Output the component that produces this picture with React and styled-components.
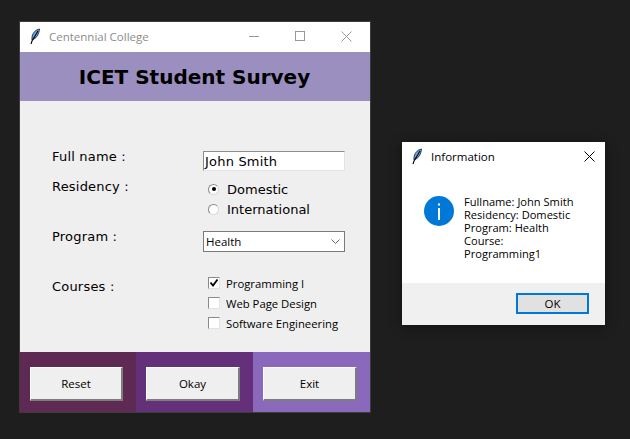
import React from 'react';
import styled, { createGlobalStyle } from 'styled-components';

const GlobalStyle = createGlobalStyle`
  html, body {
    margin: 0;
    padding: 0;
    background: #1e1e1e;
  }
`;

const Desktop = styled.div`
  width: 630px;
  height: 439px;
  overflow: hidden;
  display: flex;
  align-items: flex-start;
  padding: 21px 0 0 19px;
  box-sizing: border-box;
`;

const MainWindow = styled.div`
  width: 352px;
  height: 392px;
  box-sizing: border-box;
  display: flex;
  flex-direction: column;
  flex-shrink: 0;
  border: 1px solid #3c3c3c;
  background: #efefef;
`;

const TitleBar = styled.div`
  height: 30px;
  box-sizing: border-box;
  flex-shrink: 0;
  display: flex;
  align-items: center;
  background: #fff;
  padding: 0 1px 2px 9px;
`;

const TitleText = styled.span`
  font: 11.5px "Open Sans", sans-serif;
  color: ${p => p.$active ? '#000' : '#8c8c8c'};
  margin-left: 8px;
  flex: 1;
`;

const WinButton = styled.div`
  width: ${p => p.$width || 46}px;
  height: 100%;
  display: flex;
  align-items: center;
  justify-content: center;
`;

const Header = styled.div`
  height: 49px;
  box-sizing: border-box;
  flex-shrink: 0;
  display: flex;
  align-items: center;
  justify-content: center;
  padding: 1px 1px 0 0;
  background: #9b8fc0;
  font: bold 20px "DejaVu Sans", sans-serif;
  color: #000;
`;

const Form = styled.div`
  flex: 1;
  display: flex;
  flex-direction: column;
  padding: 47px 0 0 32px;
`;

const FormRow = styled.div`
  height: ${p => p.$height}px;
  display: grid;
  grid-template-columns: 151px 1fr;
  align-items: start;
`;

const Label = styled.div`
  font: 13px/16px "DejaVu Sans", sans-serif;
  color: #000;
  margin-top: ${p => p.$top || 0}px;
  letter-spacing: 0.2px;
`;

const Control = styled.div`
  margin-top: ${p => p.$top || 0}px;
  display: flex;
  flex-direction: column;
`;

const EntryBox = styled.div`
  width: 142px;
  height: 20px;
  box-sizing: border-box;
  background: #fff;
  border: 1px solid #e3e3e3;
  border-top-color: #8e8e8e;
  border-left-color: #8e8e8e;
  padding-left: 1px;
  font: 13px/19px "DejaVu Sans", sans-serif;
  letter-spacing: 0.2px;
  color: #000;
`;

const RadioRow = styled.div`
  height: 20px;
  display: flex;
  align-items: center;
  padding-left: 5px;
  font: 13px "DejaVu Sans", sans-serif;
  color: #000;
`;

const RadioDot = styled.span`
  width: 11px;
  height: 11px;
  border-radius: 50%;
  box-sizing: border-box;
  background: #fff;
  border: 1px solid #8a8a8a;
  border-right-color: #d8d8d8;
  border-bottom-color: #d8d8d8;
  margin-right: 8px;
  display: flex;
  align-items: center;
  justify-content: center;

  &::after {
    content: '';
    width: 4px;
    height: 4px;
    border-radius: 50%;
    background: ${p => p.$on ? '#000' : 'transparent'};
  }
`;

const Select = styled.div`
  width: 142px;
  height: 21px;
  box-sizing: border-box;
  background: #fff;
  border: 1px solid #7a7a7a;
  display: flex;
  align-items: center;
  justify-content: space-between;
  padding: 0 4px 0 2px;
  font: 11.5px "Open Sans", sans-serif;
  color: #000;
`;

const CheckRow = styled.div`
  height: 20px;
  display: flex;
  align-items: center;
  padding-left: 5px;
  font: 11.3px "Open Sans", sans-serif;
  color: #000;
`;

const CheckBox = styled.span`
  width: 12px;
  height: 12px;
  box-sizing: border-box;
  background: #fff;
  border: 1px solid #8a8a8a;
  border-right-color: #e3e3e3;
  border-bottom-color: #e3e3e3;
  margin-right: 6px;
  display: flex;
  align-items: center;
  justify-content: center;
`;

const Footer = styled.div`
  height: 60px;
  flex-shrink: 0;
  display: grid;
  grid-template-columns: 116px 117px 117px;
`;

const FooterCell = styled.div`
  background: ${p => p.$bg};
  padding: 15px 0 0 10px;
  box-sizing: border-box;
`;

const RaisedButton = styled.div`
  width: ${p => p.$width || 94}px;
  height: 34px;
  box-sizing: border-box;
  background: #efefef;
  border: 1px solid #fff;
  border-right: 2px solid #7d7d7d;
  border-bottom: 2px solid #7d7d7d;
  display: flex;
  align-items: center;
  justify-content: center;
  font: 11.5px "Open Sans", sans-serif;
  color: #000;
`;

const Dialog = styled.div`
  width: 203px;
  height: 183px;
  margin: 121px 0 0 31px;
  flex-shrink: 0;
  display: flex;
  flex-direction: column;
  background: #fff;
  box-shadow: 0 2px 12px rgba(0, 0, 0, 0.45);
`;

const DialogTitle = styled.div`
  height: 30px;
  box-sizing: border-box;
  display: flex;
  align-items: center;
  padding: 0 0 2px 9px;
  flex-shrink: 0;
`;

const DialogBody = styled.div`
  flex: 1;
  display: flex;
  padding: 23px 0 0 22px;
`;

const InfoIcon = styled.svg`
  width: 30px;
  height: 30px;
  margin-top: 1px;
  flex-shrink: 0;
`;

const Message = styled.div`
  margin-left: 10px;
  font: 11.1px/13px "Open Sans", sans-serif;
  color: #000;
  white-space: pre-line;
`;

const DialogFooter = styled.div`
  height: 42px;
  flex-shrink: 0;
  background: #f0f0f0;
  display: flex;
  justify-content: flex-end;
  padding: 10px 16px 0 0;
  box-sizing: border-box;
`;

const OkButton = styled.div`
  width: 73px;
  height: 21px;
  box-sizing: border-box;
  background: #e1e1e1;
  border: 2px solid #0078d7;
  display: flex;
  align-items: center;
  justify-content: center;
  font: 11.5px "Open Sans", sans-serif;
  color: #000;
`;

const Feather = () => (
  <svg width="12" height="17" viewBox="0 0 12 17">
    <path d="M10.5 1 C7 1.5 4 4.5 3.2 8 L2.8 11.5 L5 11 C8 9.5 10 6 10.5 1 Z" fill="#6ea6ea" stroke="#101830" strokeWidth="0.8" />
    <path d="M9 3 L3 13 L2 16" fill="none" stroke="#000" strokeWidth="1.1" />
  </svg>
);

const Minimize = () => (
  <svg width="10" height="10" viewBox="0 0 10 10"><path d="M0 5.5H10" stroke="#999" /></svg>
);

const Maximize = () => (
  <svg width="10" height="10" viewBox="0 0 10 10"><rect x="0.5" y="0.5" width="9" height="9" fill="none" stroke="#999" /></svg>
);

const Close = ({ color }) => (
  <svg width="11" height="11" viewBox="0 0 11 11"><path d="M0.5 0.5L10.5 10.5M10.5 0.5L0.5 10.5" stroke={color} fill="none" /></svg>
);

const Check = () => (
  <svg width="10" height="10" viewBox="0 0 10 10"><path d="M1.5 4.5L4 7.5L8.5 1.5" fill="none" stroke="#000" strokeWidth="1.8" /></svg>
);

const Chevron = () => (
  <svg width="9" height="5" viewBox="0 0 9 5"><path d="M0.5 0.5L4.5 4.5L8.5 0.5" fill="none" stroke="#666" /></svg>
);

const courses = [
  { name: 'Programming I', on: true },
  { name: 'Web Page Design', on: false },
  { name: 'Software Engineering', on: false },
];

const message = 'Fullname: John Smith\nResidency: Domestic\nProgram: Health\nCourse:\nProgramming1';

export default function App() {
  return (
    <Desktop>
      <GlobalStyle />
      <MainWindow>
        <TitleBar>
          <Feather />
          <TitleText>Centennial College</TitleText>
          <WinButton><Minimize /></WinButton>
          <WinButton><Maximize /></WinButton>
          <WinButton><Close color="#999" /></WinButton>
        </TitleBar>
        <Header>ICET Student Survey</Header>
        <Form>
          <FormRow $height={30}>
            <Label $top={1}>Full name :</Label>
            <Control $top={3}><EntryBox>John Smith</EntryBox></Control>
          </FormRow>
          <FormRow $height={50}>
            <Label $top={1}>Residency :</Label>
            <Control $top={1}>
              <RadioRow><RadioDot $on />Domestic</RadioRow>
              <RadioRow><RadioDot />International</RadioRow>
            </Control>
          </FormRow>
          <FormRow $height={45}>
            <Label $top={1}>Program :</Label>
            <Control $top={3}>
              <Select>Health<Chevron /></Select>
            </Control>
          </FormRow>
          <FormRow $height={60}>
            <Label $top={6}>Courses :</Label>
            <Control>
              {courses.map(c => (
                <CheckRow key={c.name}>
                  <CheckBox>{c.on && <Check />}</CheckBox>{c.name}
                </CheckRow>
              ))}
            </Control>
          </FormRow>
        </Form>
        <Footer>
          <FooterCell $bg="#5e2a54"><RaisedButton $width={93}>Reset</RaisedButton></FooterCell>
          <FooterCell $bg="#65307a"><RaisedButton>Okay</RaisedButton></FooterCell>
          <FooterCell $bg="#8a68bb"><RaisedButton>Exit</RaisedButton></FooterCell>
        </Footer>
      </MainWindow>
      <Dialog>
        <DialogTitle>
          <Feather />
          <TitleText $active>Information</TitleText>
          <WinButton $width={32}><Close color="#000" /></WinButton>
        </DialogTitle>
        <DialogBody>
          <InfoIcon viewBox="0 0 30 30">
            <circle cx="15" cy="15" r="15" fill="#0078d7" />
            <rect x="14" y="12" width="2" height="12" fill="#fff" />
            <rect x="14" y="7.5" width="2" height="2" fill="#fff" />
          </InfoIcon>
          <Message>{message}</Message>
        </DialogBody>
        <DialogFooter><OkButton>OK</OkButton></DialogFooter>
      </Dialog>
    </Desktop>
  );
}
